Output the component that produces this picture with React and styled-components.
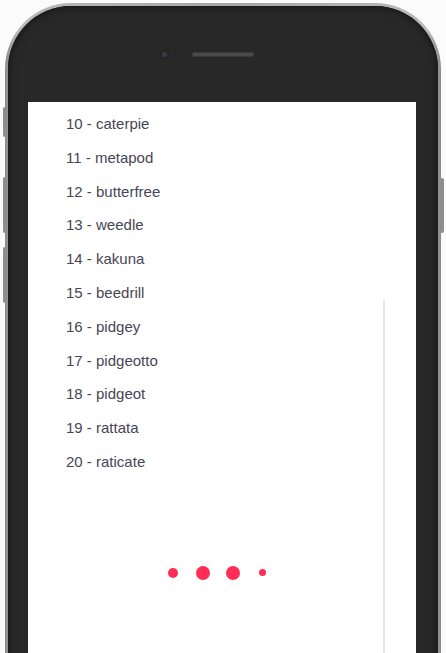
import React from 'react';
import styled, {createGlobalStyle} from 'styled-components';

const GlobalStyle = createGlobalStyle`
  html, body {
    margin: 0;
    padding: 0;
    background: #ffffff;
    overflow: hidden;
  }
  body {
    font-family: "Liberation Sans", Arial, sans-serif;
  }
`;

/////////////// PHONE /////////////
const Page = styled.div`
  position: relative;
  width: 446px;
  height: 653px;
  overflow: hidden;
  background: #fbfbfb;
`;

const Phone = styled.div`
  margin: 3px 0 0 5px;
  width: 436px;
  height: 900px;
  box-sizing: border-box;
  border-radius: 66px;
  background: linear-gradient(90deg, #8c8c8c, #b9b9b9 3%, #a5a5a5 50%, #b9b9b9 97%, #8c8c8c);
  padding: 3px;
`;

const Body = styled.div`
  height: 100%;
  border-radius: 63px;
  background: #282828;
  box-shadow: inset 0 0 0 2px #1e1e1e, inset 0 0 10px rgba(0, 0, 0, 0.5);
  display: flex;
  flex-direction: column;
  align-items: center;
`;

const TopBezel = styled.div`
  height: 96px;
  width: 100%;
  display: flex;
  align-items: center;
  justify-content: center;
  gap: 24px;
  padding-right: 32px;
  box-sizing: border-box;
`;

const Camera = styled.div`
  width: 7px;
  height: 7px;
  border-radius: 50%;
  background: radial-gradient(circle at 50% 50%, #4a4a55 0, #2a2a33 60%, #1c1c22 100%);
  box-shadow: 0 0 0 1px #202026;
`;

const Speaker = styled.div`
  width: 62px;
  height: 5px;
  border-radius: 3px;
  background: #4a4a4a;
  box-shadow: inset 0 0 0 1px #3a3a3a;
`;

const SideButton = styled.div`
  position: absolute;
  left: ${props => props.left}px;
  top: ${props => props.top}px;
  width: 4px;
  height: ${props => props.height}px;
  background: #8e8e8e;
  border-radius: 2px;
`;

/////////////// SCREEN /////////////
const Screen = styled.div`
  position: relative;
  width: 388px;
  margin-right: 2px;
  flex: 1;
  background: #ffffff;
  padding-top: 5px;
  box-sizing: border-box;
`;

const List = styled.ul`
  list-style: none;
  margin: 0;
  padding: 0 0 0 38px;
`;

const Item = styled.li`
  height: 33.8px;
  line-height: 33.8px;
  font-size: 15px;
  color: #464655;
`;

const ScrollTrack = styled.div`
  position: absolute;
  left: 355px;
  top: 198px;
  bottom: 0;
  width: 2px;
  background: #e6e6e6;
`;

/////////////// LOADER /////////////
const Loader = styled.div`
  height: 64px;
  margin-top: 62px;
  display: flex;
  align-items: center;
  justify-content: center;
  padding-right: 9px;
`;

const DotSlot = styled.div`
  width: 30px;
  display: flex;
  justify-content: center;
`;

const Dot = styled.div`
  width: ${props => props.size}px;
  height: ${props => props.size}px;
  border-radius: 50%;
  background: #ff2d55;
`;

const pokemon = [
  'caterpie', 'metapod', 'butterfree', 'weedle', 'kakuna', 'beedrill',
  'pidgey', 'pidgeotto', 'pidgeot', 'rattata', 'raticate',
];

export default function App() {
  return (
    <Page>
      <GlobalStyle />
      <SideButton left={3} top={107} height={30} />
      <SideButton left={3} top={177} height={56} />
      <SideButton left={3} top={247} height={56} />
      <SideButton left={440} top={178} height={55} />
      <Phone>
        <Body>
          <TopBezel>
            <Camera />
            <Speaker />
          </TopBezel>
          <Screen>
            <List>
              {pokemon.map((name, i) => (
                <Item key={name}>{i + 10} - {name}</Item>
              ))}
            </List>
            <Loader>
              {[10, 14, 14, 7].map((s, i) => (
                <DotSlot key={i}>
                  <Dot size={s} />
                </DotSlot>
              ))}
            </Loader>
            <ScrollTrack />
          </Screen>
        </Body>
      </Phone>
    </Page>
  );
}
